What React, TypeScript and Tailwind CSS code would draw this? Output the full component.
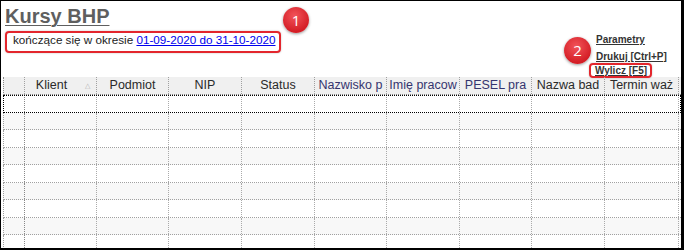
import React from 'react';

const cols = [
  { w: 'w-[21px]', label: '', navy: false },
  { w: 'w-[72px]', label: 'Klient', navy: false, sort: true },
  { w: 'w-[72px]', label: 'Podmiot', navy: false },
  { w: 'w-[73px]', label: 'NIP', navy: false },
  { w: 'w-[73px]', label: 'Status', navy: false },
  { w: 'w-[72px]', label: 'Nazwisko p', navy: true },
  { w: 'w-[73px]', label: 'Imię pracow', navy: true },
  { w: 'w-[72px]', label: 'PESEL pra', navy: true },
  { w: 'w-[73px]', label: 'Nazwa bad', navy: false },
  { w: 'w-[74px]', label: 'Termin waż', navy: false },
];

function Badge({ n, className }: { n: number; className: string }) {
  return (
    <div
      className={`absolute flex items-center justify-center rounded-full bg-[radial-gradient(circle_at_45%_35%,#f2545a,#d41e26_70%)] text-white text-[15px] font-['Open_Sans',sans-serif] shadow-[0_1px_3px_rgba(0,0,0,0.4)] ${className}`}
    >
      {n}
    </div>
  );
}

export default function App() {
  const rows = Array.from({ length: 9 });

  return (
    <div className="relative w-[684px] h-[250px] bg-white border-black border-t border-l border-r-[3px] border-b-2 overflow-hidden font-['Liberation_Sans',Arial,sans-serif]">
      {/* header area */}
      <div className="flex h-[76px]">
        <div className="pl-[4px] pt-[4px]">
          <div className="text-[20px] leading-[22px] font-bold text-[#5f5f5f] underline decoration-1 underline-offset-[2px]">
            Kursy BHP
          </div>
          <div className="mt-[1px] inline-block border-2 border-[#e3262d] rounded-[4px] pl-[6px] pr-[3px] pb-[4px] text-[11.7px] leading-[14px] text-[#222] shadow-[0_0_2px_rgba(0,0,0,0.25)]">
            kończące się w okresie{' '}
            <span className="text-[#0000ee] underline">01-09-2020 do 31-10-2020</span>
          </div>
        </div>

        <div className="ml-auto mr-[12px] mt-[33px] w-[80px] text-[10px] font-bold text-[#333]">
          <div className="ml-[7px] leading-[12px] underline">Parametry</div>
          <div className="ml-[7px] mt-[5px] leading-[12px] underline whitespace-nowrap">Drukuj [Ctrl+P]</div>
          <div className="inline-block border-2 border-[#e3262d] rounded-[4px] pl-[4px] pr-[3px] leading-[11px] shadow-[0_0_2px_rgba(0,0,0,0.25)]">
            <span className="underline">Wylicz [F5]</span>
          </div>
        </div>
      </div>

      {/* grid */}
      <div className="ml-[2px]">
        <div className="flex h-[18px] bg-[#f0f0f0] border-b border-dotted border-[#888] border-l">
          {cols.map((c, i) => (
            <div
              key={i}
              className={`relative ${c.w} shrink-0 flex items-center justify-center overflow-hidden whitespace-nowrap border-r border-dotted border-[#a0a0a0] text-[12.5px] ${c.navy ? 'text-[#35356f]' : 'text-[#2a2a2a]'} ${c.sort ? 'pr-[18px]' : ''}`}
            >
              {c.label}
              {c.sort && (
                <span className="absolute right-[6px] top-[4px] text-[7px] text-[#b0b0b0]">△</span>
              )}
            </div>
          ))}
        </div>

        {rows.map((_, r) => (
          <div
            key={r}
            className={`flex h-[17.5px] border-l border-b border-dotted border-[#a0a0a0] ${r % 2 === 1 ? 'bg-[#f8f8f8]' : 'bg-white'} ${r === 0 ? 'outline outline-1 outline-dotted outline-black -outline-offset-1' : ''}`}
          >
            {cols.map((c, i) => (
              <div
                key={i}
                className={`${c.w} shrink-0 border-r border-dotted ${i === 0 ? 'border-[#888]' : 'border-[#aaa]'}`}
              />
            ))}
          </div>
        ))}
      </div>

      <Badge n={1} className="left-[282px] top-[6px] w-[26px] h-[26px]" />
      <Badge n={2} className="left-[563px] top-[36px] w-[27px] h-[27px]" />
    </div>
  );
}
